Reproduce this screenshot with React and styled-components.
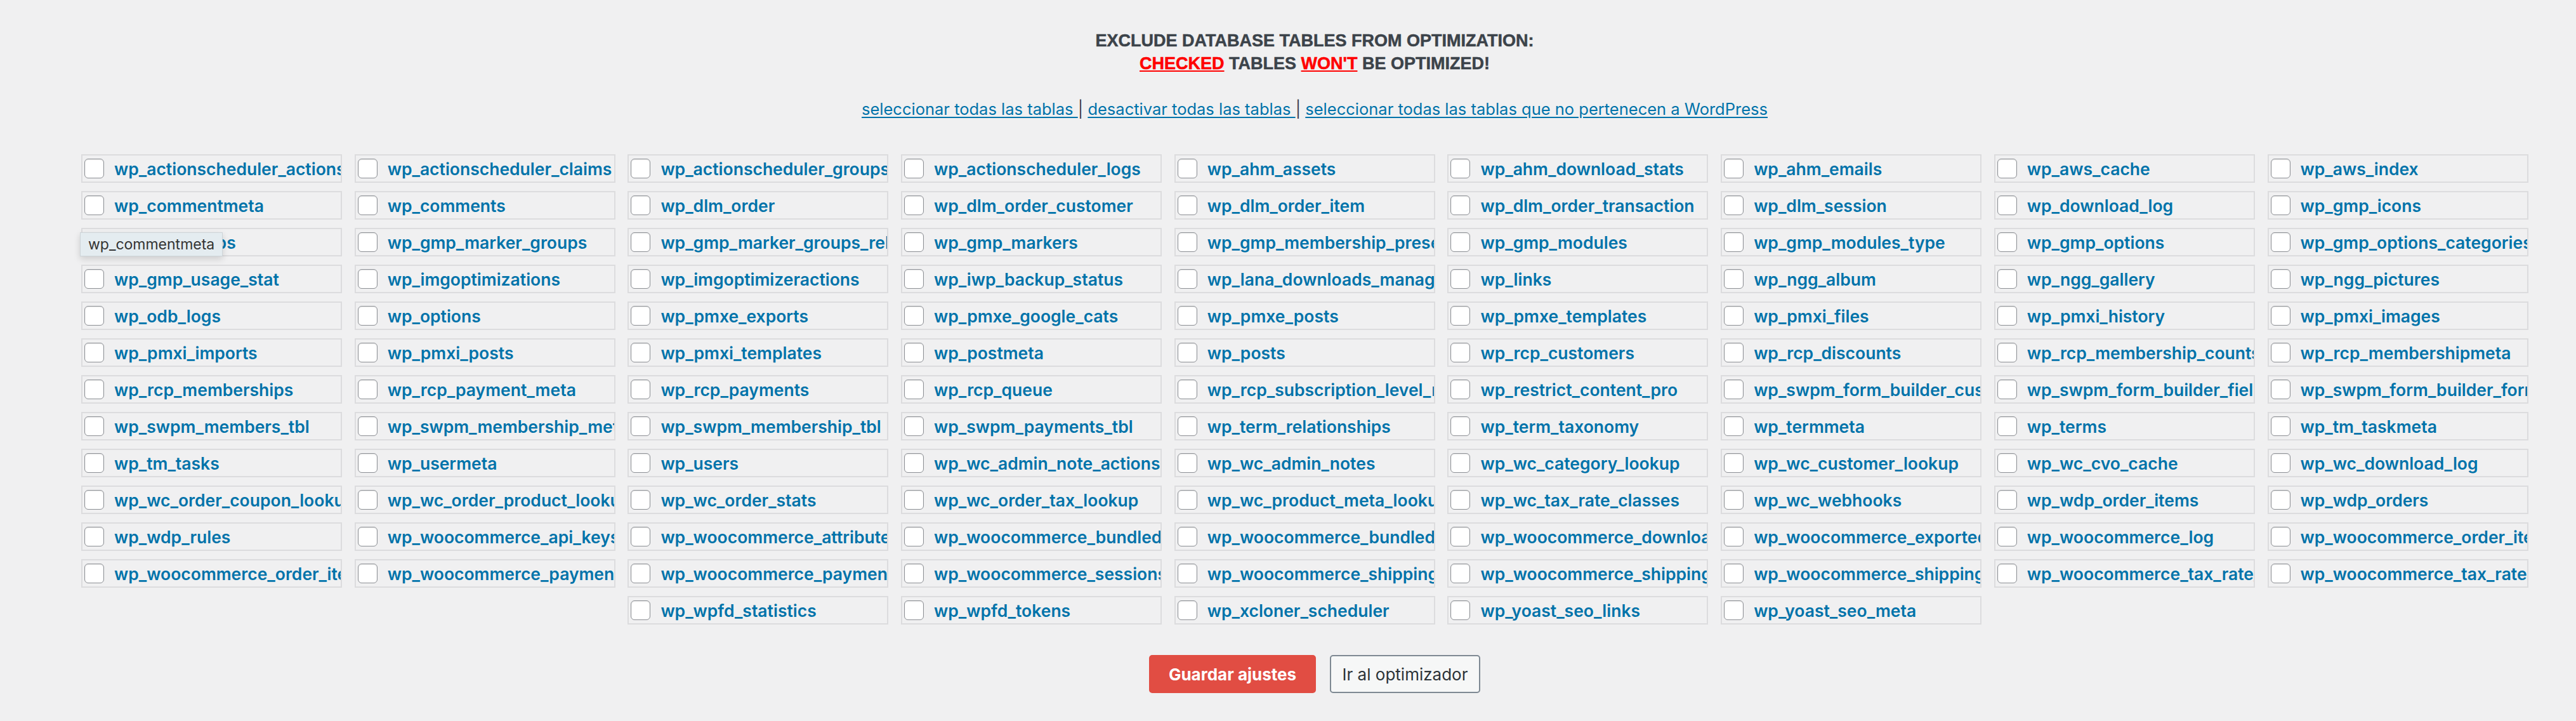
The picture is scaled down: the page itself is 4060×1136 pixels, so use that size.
import React from "react";
import styled, { createGlobalStyle } from "styled-components";

const GlobalStyle = createGlobalStyle`
  html, body {
    margin: 0;
    background: #f0f0f1;
  }
  body {
    font-family: Inter, "Noto Sans", sans-serif;
  }
`;

const TABLES = [
  "wp_actionscheduler_actions", "wp_actionscheduler_claims", "wp_actionscheduler_groups", "wp_actionscheduler_logs", "wp_ahm_assets", "wp_ahm_download_stats", "wp_ahm_emails", "wp_aws_cache", "wp_aws_index",
  "wp_commentmeta", "wp_comments", "wp_dlm_order", "wp_dlm_order_customer", "wp_dlm_order_item", "wp_dlm_order_transaction", "wp_dlm_session", "wp_download_log", "wp_gmp_icons",
  "wp_gmp_maps", "wp_gmp_marker_groups", "wp_gmp_marker_groups_relation", "wp_gmp_markers", "wp_gmp_membership_presets", "wp_gmp_modules", "wp_gmp_modules_type", "wp_gmp_options", "wp_gmp_options_categories",
  "wp_gmp_usage_stat", "wp_imgoptimizations", "wp_imgoptimizeractions", "wp_iwp_backup_status", "wp_lana_downloads_manager_logs", "wp_links", "wp_ngg_album", "wp_ngg_gallery", "wp_ngg_pictures",
  "wp_odb_logs", "wp_options", "wp_pmxe_exports", "wp_pmxe_google_cats", "wp_pmxe_posts", "wp_pmxe_templates", "wp_pmxi_files", "wp_pmxi_history", "wp_pmxi_images",
  "wp_pmxi_imports", "wp_pmxi_posts", "wp_pmxi_templates", "wp_postmeta", "wp_posts", "wp_rcp_customers", "wp_rcp_discounts", "wp_rcp_membership_counts", "wp_rcp_membershipmeta",
  "wp_rcp_memberships", "wp_rcp_payment_meta", "wp_rcp_payments", "wp_rcp_queue", "wp_rcp_subscription_level_meta", "wp_restrict_content_pro", "wp_swpm_form_builder_custom", "wp_swpm_form_builder_fields", "wp_swpm_form_builder_forms",
  "wp_swpm_members_tbl", "wp_swpm_membership_meta_tbl", "wp_swpm_membership_tbl", "wp_swpm_payments_tbl", "wp_term_relationships", "wp_term_taxonomy", "wp_termmeta", "wp_terms", "wp_tm_taskmeta",
  "wp_tm_tasks", "wp_usermeta", "wp_users", "wp_wc_admin_note_actions", "wp_wc_admin_notes", "wp_wc_category_lookup", "wp_wc_customer_lookup", "wp_wc_cvo_cache", "wp_wc_download_log",
  "wp_wc_order_coupon_lookup", "wp_wc_order_product_lookup", "wp_wc_order_stats", "wp_wc_order_tax_lookup", "wp_wc_product_meta_lookup", "wp_wc_tax_rate_classes", "wp_wc_webhooks", "wp_wdp_order_items", "wp_wdp_orders",
  "wp_wdp_rules", "wp_woocommerce_api_keys", "wp_woocommerce_attribute_taxonomies", "wp_woocommerce_bundled_itemmeta", "wp_woocommerce_bundled_items", "wp_woocommerce_downloadable_product_permissions", "wp_woocommerce_exported_csv", "wp_woocommerce_log", "wp_woocommerce_order_itemmeta",
  "wp_woocommerce_order_items", "wp_woocommerce_payment_tokenmeta", "wp_woocommerce_payment_tokens", "wp_woocommerce_sessions", "wp_woocommerce_shipping_zone_locations", "wp_woocommerce_shipping_zone_methods", "wp_woocommerce_shipping_zones", "wp_woocommerce_tax_rate_locations", "wp_woocommerce_tax_rates",
  "wp_wpfd_statistics", "wp_wpfd_tokens", "wp_xcloner_scheduler", "wp_yoast_seo_links", "wp_yoast_seo_meta",
];

const Page = styled.div`
  width: 3888px;
  margin-left: 128px;
  padding: 46px 0 44px;
`;

const Heading = styled.h2`
  margin: 0;
  text-align: center;
  font-family: "Liberation Sans", Arial, sans-serif;
  font-weight: 700;
  font-size: 27px;
  line-height: 36px;
  color: #3c434a;
  text-transform: uppercase;
  -webkit-text-stroke: 0.5px currentColor;
`;

const Warn = styled.span`
  color: #ff0000;
  text-decoration: underline;
`;

const LinkBar = styled.p`
  margin: 38px 0 0;
  text-align: center;
  font-size: 25.5px;
  line-height: 32px;
  color: #3c434a;
`;

const TextLink = styled.a`
  color: #0073aa;
  text-decoration: underline;
  text-underline-offset: 3px;
  cursor: pointer;
`;

const TableGrid = styled.div`
  display: grid;
  grid-template-columns: repeat(9, 411px);
  grid-auto-rows: 45px;
  column-gap: 19.7px;
  row-gap: 13px;
  margin-top: 55px;
`;

const TableCell = styled.label`
  position: relative;
  display: flex;
  align-items: center;
  gap: 16px;
  min-width: 0;
  padding-left: 3px;
  border: 2px solid #dcdcde;
  box-sizing: border-box;
  grid-column-start: ${({ $start }) => $start || "auto"};
`;

const Check = styled.input`
  appearance: none;
  flex: none;
  width: 31px;
  height: 31px;
  margin: 0;
  border: 1.5px solid #8c8f94;
  border-radius: 6px;
  background: #fff;
  box-shadow: inset 0 1px 2px rgba(0, 0, 0, 0.1);
  box-sizing: border-box;
`;

const TableName = styled.span`
  flex: 1;
  min-width: 0;
  overflow: hidden;
  white-space: nowrap;
  font-size: 26.5px;
  font-weight: 600;
  color: #0073aa;
`;

const Tooltip = styled.div`
  position: absolute;
  left: -4px;
  top: 5px;
  z-index: 2;
  height: 38px;
  padding: 0 12px;
  box-sizing: border-box;
  background: #e4ecf0;
  border: 1px solid #cdd4d8;
  box-shadow: 0 4px 10px rgba(0, 0, 0, 0.15);
  font-size: 23px;
  line-height: 36px;
  color: #333;
  white-space: nowrap;
`;

const Actions = styled.div`
  display: flex;
  justify-content: center;
  gap: 22px;
  margin-top: 48px;
`;

const SaveButton = styled.button`
  width: 263px;
  height: 60px;
  border: none;
  border-radius: 5px;
  background: #e14d43;
  color: #fff;
  font-family: Inter, sans-serif;
  font-size: 26px;
  font-weight: 700;
`;

const SecondaryButton = styled.button`
  width: 237px;
  height: 60px;
  border: 2px solid #7e8993;
  border-radius: 5px;
  background: #f6f7f7;
  color: #2c3338;
  font-family: Inter, sans-serif;
  font-size: 26px;
  font-weight: 400;
`;

const App = () => {
  return (
    <>
      <GlobalStyle />
      <Page>
        <Heading>
          Exclude database tables from optimization:
          <br />
          <Warn>Checked</Warn> tables <Warn>won't</Warn> be optimized!
        </Heading>
        <LinkBar>
          <TextLink>seleccionar todas las tablas </TextLink>|{" "}
          <TextLink>desactivar todas las tablas </TextLink>|{" "}
          <TextLink>seleccionar todas las tablas que no pertenecen a WordPress</TextLink>
        </LinkBar>
        <TableGrid>
          {TABLES.map((name, i) => (
            <TableCell key={name} $start={i === 108 ? 3 : undefined}>
              <Check type="checkbox" />
              <TableName>{name}</TableName>
              {name === "wp_gmp_maps" && <Tooltip>wp_commentmeta</Tooltip>}
            </TableCell>
          ))}
        </TableGrid>
        <Actions>
          <SaveButton>Guardar ajustes</SaveButton>
          <SecondaryButton>Ir al optimizador</SecondaryButton>
        </Actions>
      </Page>
    </>
  );
};

export default App;
